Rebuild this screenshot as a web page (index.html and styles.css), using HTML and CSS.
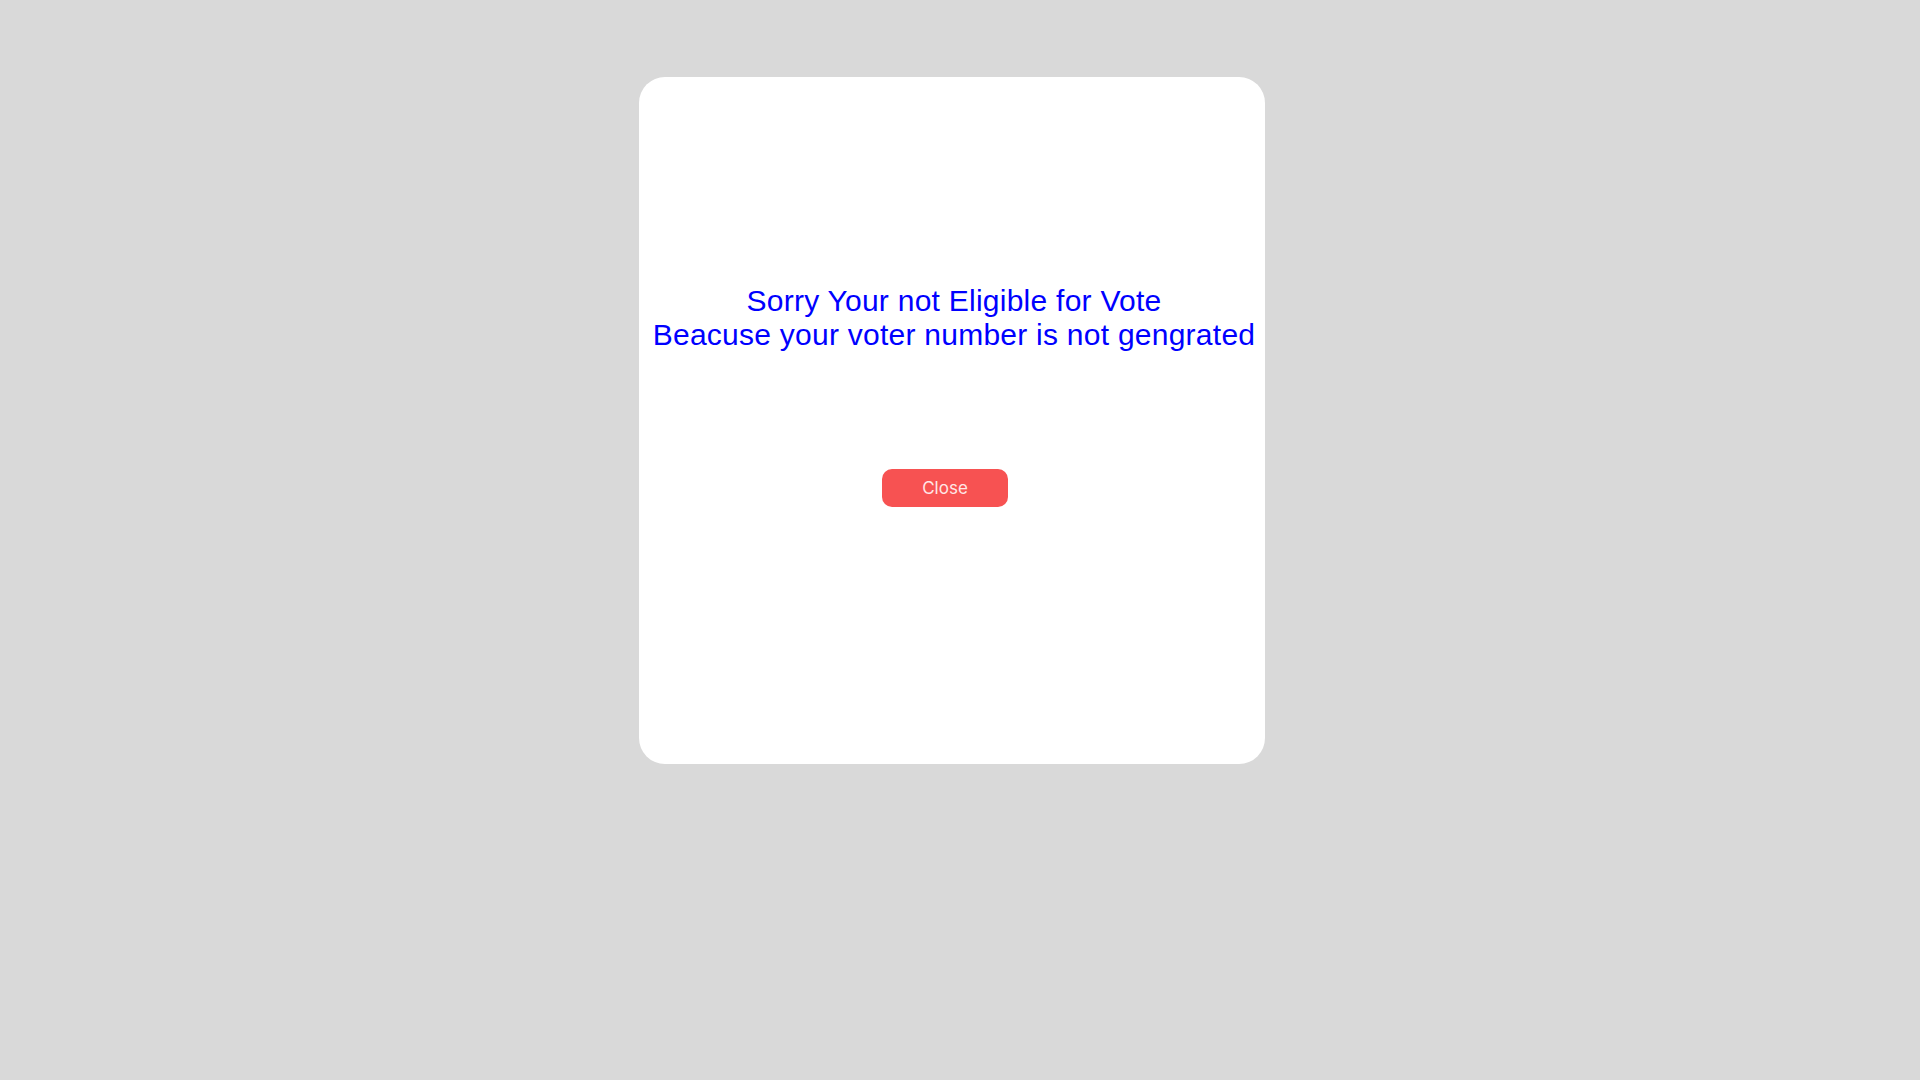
FILE: index.html
```html
<!DOCTYPE html>
<html lang="en">
<head>
<meta charset="utf-8">
<title>Not Eligible</title>
<link rel="stylesheet" href="styles.css">
</head>
<body>
<div class="page">
  <div class="card">
    <p class="message">Sorry Your not Eligible for Vote<br>Beacuse your voter number is not gengrated</p>
    <button class="close-btn" type="button">Close</button>
  </div>
</div>
</body>
</html>
```
FILE: styles.css
```css
html, body {
  margin: 0;
  padding: 0;
  height: 100%;
  background: #d9d9d9;
}

.page {
  display: flex;
  justify-content: flex-start;
  align-items: flex-start;
  padding: 77px 0 0 639px;
  min-height: 100vh;
  box-sizing: border-box;
}

.card {
  width: 626px;
  height: 687px;
  background: #ffffff;
  border-radius: 26px;
  display: flex;
  flex-direction: column;
  align-items: flex-start;
  padding-top: 207px;
  box-sizing: border-box;
}

.message {
  margin: 0;
  width: 100%;
  text-align: center;
  font-family: "Liberation Sans", Arial, sans-serif;
  font-size: 30px;
  line-height: 34px;
  letter-spacing: 0.25px;
  color: #0000ff;
  padding-left: 4px;
  box-sizing: border-box;
}

.close-btn {
  margin-top: 117px;
  margin-left: 243px;
  width: 126px;
  height: 38px;
  border: none;
  border-radius: 10px;
  background: #f75252;
  color: #ffe6e6;
  font-family: Inter, "Noto Sans", sans-serif;
  font-size: 17px;
  padding: 0;
  cursor: pointer;
}
```
